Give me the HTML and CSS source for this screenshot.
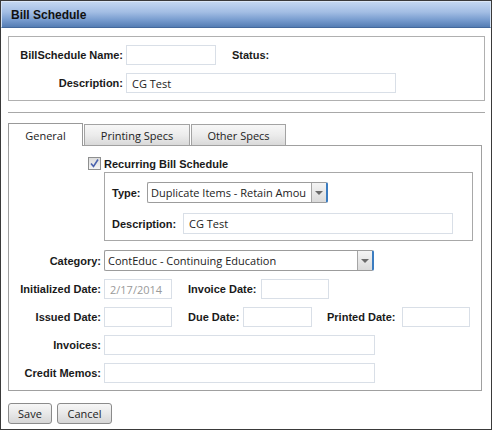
FILE: index.html
```html
<!DOCTYPE html>
<html>
<head>
<meta charset="utf-8">
<link rel="stylesheet" href="styles.css">
</head>
<body>
<div class="window">
  <div class="titlebar"><span class="title">Bill Schedule</span></div>
  <div class="content">
    <div class="top-box">
      <div class="row">
        <span class="lbl lbl-top">BillSchedule Name:</span>
        <input class="inp w90" type="text" value="">
        <span class="lbl status">Status:</span>
      </div>
      <div class="row row2">
        <span class="lbl lbl-top">Description:</span>
        <input class="inp w270" type="text" value="CG Test">
      </div>
    </div>
    <div class="sep"></div>
    <div class="tabs">
      <div class="tab active t-general">General</div>
      <div class="tab t-print">Printing Specs</div>
      <div class="tab t-other">Other Specs</div>
    </div>
    <div class="panel">
      <div class="prow cb-row">
        <span class="lcol"><span class="checkbox"><svg width="11" height="11" viewBox="0 0 11 11"><path d="M2 5.5 L4.5 8.5 L9 1.5" fill="none" stroke="#4a62ad" stroke-width="1.6"/></svg></span></span>
        <span class="lbl">Recurring Bill Schedule</span>
      </div>
      <div class="prow inner-wrap">
        <span class="lcol"></span>
        <div class="inner-box">
          <div class="irow">
            <span class="lbl l-type">Type:</span>
            <div class="select w181"><span class="sel-text">Duplicate Items - Retain Amou</span><span class="sel-btn"><span class="tri"></span></span></div>
          </div>
          <div class="irow irow2">
            <span class="lbl l-idesc">Description:</span>
            <input class="inp w270 h21" type="text" value="CG Test">
          </div>
        </div>
      </div>
      <div class="prow cat-row">
        <span class="lcol lbl">Category:</span>
        <div class="select w270"><span class="sel-text">ContEduc - Continuing Education</span><span class="sel-btn"><span class="tri"></span></span></div>
      </div>
      <div class="prow frow first">
        <span class="lcol lbl">Initialized Date:</span>
        <input class="inp w68 dim" type="text" value="2/17/2014">
        <span class="lbl gl l-invd">Invoice Date:</span>
        <input class="inp w68" type="text" value="">
      </div>
      <div class="prow frow">
        <span class="lcol lbl">Issued Date:</span>
        <input class="inp w68" type="text" value="">
        <span class="lbl gl l-due">Due Date:</span>
        <input class="inp w69" type="text" value="">
        <span class="lbl gl2 l-prt">Printed Date:</span>
        <input class="inp w68" type="text" value="">
      </div>
      <div class="prow frow">
        <span class="lcol lbl">Invoices:</span>
        <input class="inp w271" type="text" value="">
      </div>
      <div class="prow frow">
        <span class="lcol lbl">Credit Memos:</span>
        <input class="inp w271" type="text" value="">
      </div>
    </div>
    <div class="buttons">
      <button class="btn b-save">Save</button>
      <button class="btn b-cancel">Cancel</button>
    </div>
  </div>
</div>
</body>
</html>
```
FILE: styles.css
```css
* { box-sizing: border-box; }
html, body { margin: 0; padding: 0; background: #fff; }
body { font-family: "Liberation Sans", Arial, sans-serif; }

.window {
  width: 492px;
  height: 430px;
  border: 1px solid #3a3a3a;
  background: #fff;
  overflow: hidden;
}

.titlebar {
  height: 27px;
  background: linear-gradient(to bottom, #c3d7f1 0%, #a3bee4 40%, #7a9ed0 70%, #557db4 100%);
  border-top: 1px solid #dbe7f7;
  border-left: 1px solid #d3e2f5;
  border-right: 1px solid #d3e2f5;
  border-bottom: 1px solid #44699c;
  display: flex;
  align-items: center;
  padding-left: 9px;
}
.title {
  font-weight: bold;
  font-size: 12px;
  color: #111;
  padding-top: 1px;
}

.content {
  padding: 8px 6px 0 7px;
}

.lbl {
  font-weight: bold;
  font-size: 11px;
  color: #1a1a1a;
  white-space: nowrap;
}

.inp {
  height: 20px;
  border: 1px solid #d9dfe7;
  background: #fff;
  padding: 0 5px;
  margin: 0;
  font-family: "Open Sans", "DejaVu Sans", sans-serif;
  font-size: 11px;
  color: #222;
  outline: none;
}
.h21 { height: 21px; }
.dim { color: #9a9a9a; }
.w68 { width: 68px; }
.w69 { width: 69px; }
.w90 { width: 90px; }
.w181 { width: 181px; }
.w270 { width: 270px; }
.w271 { width: 271px; }

/* top box */
.top-box {
  border: 1px solid #b0b0b0;
  height: 65px;
  padding-top: 8px;
}
.row {
  display: flex;
  align-items: center;
  height: 20px;
}
.row2 { margin-top: 8px; }
.lbl-top {
  width: 114px;
  text-align: right;
  margin-right: 3px;
}
.status { margin-left: 16px; }

.sep {
  height: 1px;
  background: #a8a8a8;
  margin-top: 11px;
}

/* tabs */
.tabs {
  display: flex;
  align-items: flex-end;
  height: 21px;
  margin-top: 11px;
  gap: 1px;
}
.tab {
  height: 21px;
  border: 1px solid #a3a3a3;
  border-bottom: none;
  background: linear-gradient(to bottom, #f7f7f7 0%, #ececec 50%, #d9d9d9 100%);
  font-family: "Open Sans", "DejaVu Sans", sans-serif;
  font-size: 11px;
  color: #222;
  display: flex;
  align-items: center;
  justify-content: center;
  padding-top: 1px;
}
.tab.active {
  height: 23px;
  margin-bottom: -1px;
  background: #fff;
  position: relative;
  z-index: 1;
  padding-bottom: 1px;
  border-color: #999;
}
.t-general { width: 75px; }
.t-print { width: 106px; }
.t-other { width: 95px; }

.panel {
  width: 474px;
  height: 246px;
  border: 1px solid #a0a0a0;
  padding-top: 11px;
}
.prow {
  display: flex;
  align-items: center;
}
.lcol {
  width: 92px;
  flex: none;
  margin-right: 3px;
  text-align: right;
  display: flex;
  justify-content: flex-end;
}
.prow .lcol.lbl { display: block; }

.cb-row { height: 13px; }
.checkbox {
  width: 13px;
  height: 13px;
  border: 1px solid #8e8f8f;
  background: linear-gradient(to bottom, #dcdcdc, #f4f4f4);
  display: flex;
  align-items: center;
  justify-content: center;
}
.checkbox svg { display: block; }

.inner-wrap { margin-top: 2px; align-items: flex-start; }
.inner-box {
  width: 369px;
  height: 69px;
  border: 1px solid #a8a8a8;
  padding: 9px 0 0 7px;
}
.irow {
  display: flex;
  align-items: center;
  height: 21px;
}
.irow2 { margin-top: 10px; }
.l-type { width: 35px; }
.l-idesc { width: 71px; }

.select {
  height: 21px;
  border: 1px solid #9c9c9c;
  border-right: 2px solid #3b7cc0;
  border-radius: 2px;
  display: flex;
  align-items: stretch;
  background: #fff;
  overflow: hidden;
}
.sel-text {
  flex: 1;
  font-family: "Open Sans", "DejaVu Sans", sans-serif;
  font-size: 11px;
  color: #222;
  padding-left: 3px;
  white-space: nowrap;
  overflow: hidden;
  display: flex;
  align-items: center;
}
.sel-btn {
  width: 15px;
  flex: none;
  border-left: 1px solid #a5a5a5;
  background: linear-gradient(to bottom, #f4f4f4, #dadada);
  display: flex;
  align-items: center;
  justify-content: center;
}
.tri {
  width: 0;
  height: 0;
  border-left: 4px solid transparent;
  border-right: 4px solid transparent;
  border-top: 4px solid #6a6a6a;
}

.cat-row { margin-top: 9px; }
.cat-row .select { height: 21px; }

.frow { margin-top: 8px; height: 20px; }
.frow.first { margin-top: 8px; }
.gl { margin-left: 16px; }
.gl2 { margin-left: 15px; }
.l-invd { width: 73px; }
.l-due { width: 55px; }
.l-prt { width: 75px; }

.buttons {
  display: flex;
  gap: 5px;
  margin-top: 12px;
}
.btn {
  height: 21px;
  border: 1px solid #8b8b8b;
  border-radius: 3px;
  background: linear-gradient(to bottom, #f6f6f6 0%, #e8e8e8 50%, #d6d6d6 100%);
  font-family: "Open Sans", "DejaVu Sans", sans-serif;
  font-size: 11px;
  color: #222;
  padding: 0;
  margin: 0;
}
.b-save { width: 44px; }
.b-cancel { width: 55px; }
```
